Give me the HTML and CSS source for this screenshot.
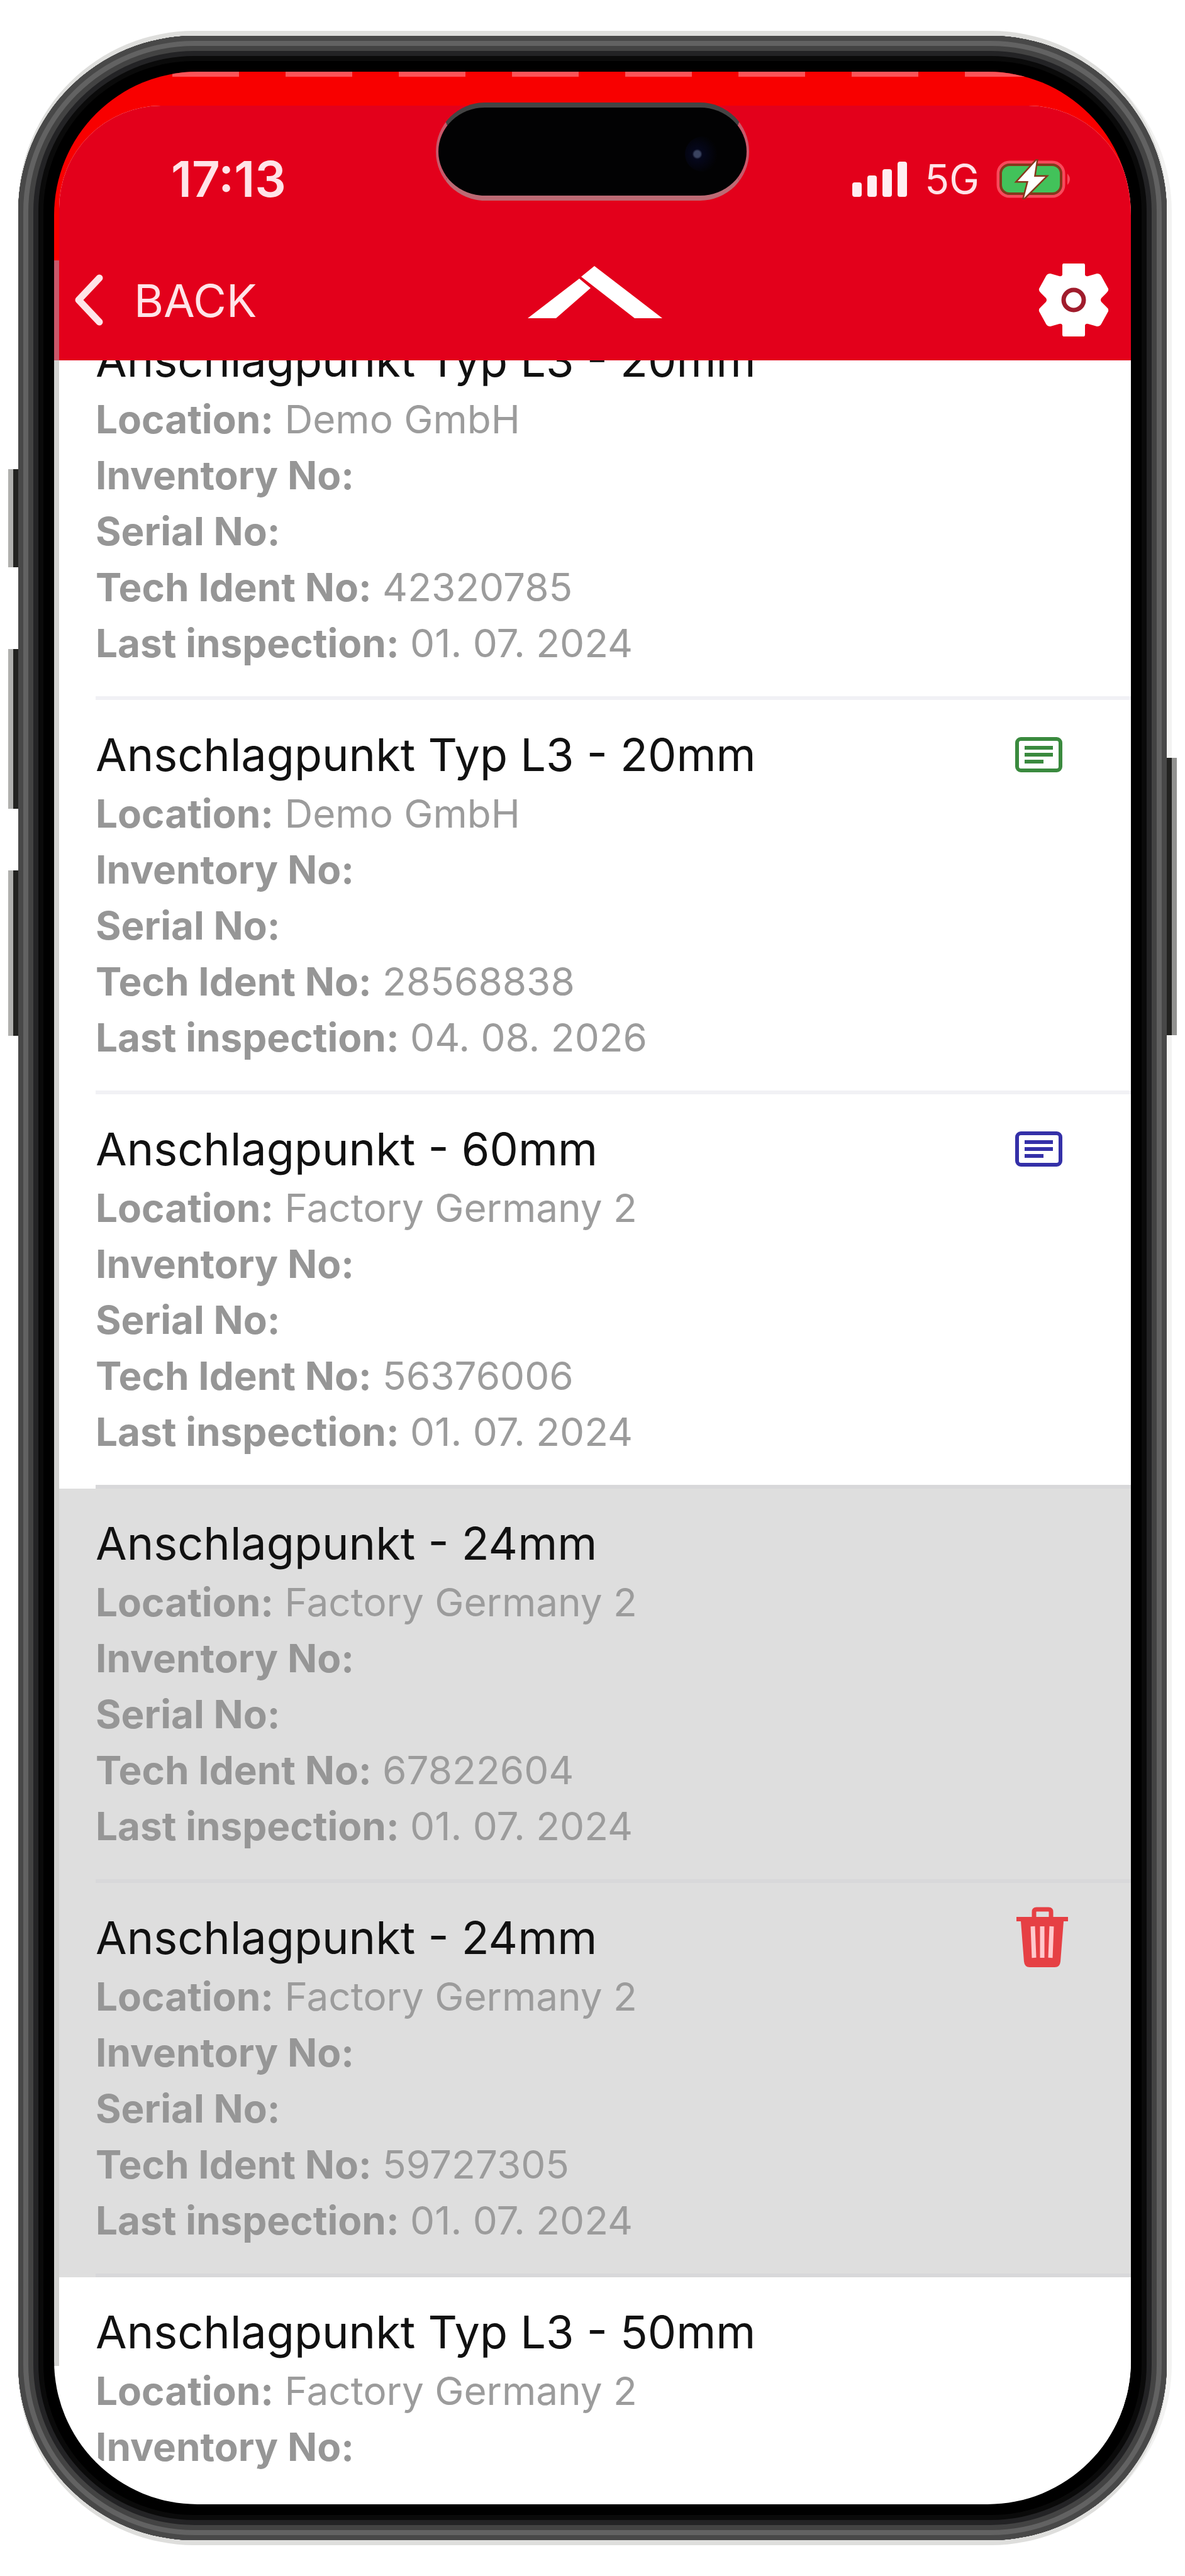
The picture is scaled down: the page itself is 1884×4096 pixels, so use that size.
FILE: index.html
```
<!DOCTYPE html>
<html lang="en">
<head>
    <meta charset="UTF-8">
    <meta name="viewport" content="width=device-width, initial-scale=1.0">
    <title>Inspections</title>
    <link rel="stylesheet" href="styles.css">
</head>
<body>
  <div class="phone">
    <span class="side-button action"></span>
    <span class="side-button volume-up"></span>
    <span class="side-button volume-down"></span>
    <span class="side-button power"></span>

    <div class="screen">
      <div class="dashes"></div>
      <div class="island"><span class="camera"></span></div>

      <div class="app">
        <header class="header">
          <div class="status-bar">
            <span class="time">17:13</span>
            <div class="status-icons">
              <svg class="signal" viewBox="0 0 88 56" width="88" height="56" fill="#ffeef2">
                <rect x="0" y="33" width="15" height="23" rx="4"/>
                <rect x="24" y="22" width="15" height="34" rx="4"/>
                <rect x="48" y="12" width="15" height="44" rx="4"/>
                <rect x="72" y="0" width="15" height="56" rx="4"/>
              </svg>
              <span class="network">5G</span>
              <svg class="battery" viewBox="0 0 122 64" width="122" height="64">
                <rect x="3" y="5" width="104" height="54" rx="18" fill="none" stroke="#f84a5c" stroke-width="5"/>
                <rect x="7" y="9" width="96" height="46" rx="14" fill="#42c25a" stroke="#86381c" stroke-width="4"/>
                <path d="M113 23q8 9 0 18z" fill="#f84a5c"/>
                <path d="M64 2L34 35H51L44 62L78 28H60L64 2Z" fill="#fff" stroke="#86381c" stroke-width="5" paint-order="stroke"/>
              </svg>
            </div>
          </div>
          <nav class="nav-bar">
            <button type="button" class="back-button">
              <svg viewBox="0 0 48 84" width="48" height="84" fill="none" stroke="#ffe3e8" stroke-width="11" stroke-linecap="round" stroke-linejoin="round">
                <path d="M41 7L8 42L41 77"/>
              </svg>
              BACK
            </button>
            <a href="#" class="logo" aria-label="Home">
              <svg viewBox="0 0 214 84" width="214" height="84" fill="#fff">
                <path d="M0 83L82 20L100 35L45 83Z"/>
                <path d="M85 17L106 0L214 83H170Z"/>
              </svg>
            </a>
            <button type="button" class="settings-button" aria-label="Settings">
              <svg viewBox="0 0 112 118" width="112" height="118">
                <path d="M40 1H72Q74 1 74 4V19Q75 22 79 21L93 17Q98 17 100 21L111 41Q112 45 108 48L100 56Q98 59 100 62L108 70Q112 73 111 77L100 97Q98 101 93 101L79 97Q75 96 74 99V114Q74 117 72 117H40Q38 117 38 114V99Q37 96 33 97L19 101Q14 101 12 97L1 77Q0 73 4 70L12 62Q14 59 12 56L4 48Q0 45 1 41L12 21Q14 17 19 17L33 21Q37 22 38 19V4Q38 1 40 1Z" fill="#fff"/>
                <circle cx="56" cy="59" r="16" fill="#fff" stroke="#a01c2c" stroke-width="7"/>
              </svg>
            </button>
          </nav>
        </header>

        <ul class="list">
          <li class="item">
            <div class="item-body">
              <div class="item-head"><h2>Anschlagpunkt Typ L3 - 20mm</h2></div>
              <p><b>Location:</b> Demo GmbH</p>
              <p><b>Inventory No:</b></p>
              <p><b>Serial No:</b></p>
              <p><b>Tech Ident No:</b> 42320785</p>
              <p><b>Last inspection:</b> 01. 07. 2024</p>
            </div>
          </li>
          <li class="item">
            <div class="item-body">
              <div class="item-head">
                <h2>Anschlagpunkt Typ L3 - 20mm</h2>
                <button type="button" class="icon-button note-green" aria-label="Note">
                  <svg viewBox="0 0 100 100" width="100" height="100" fill="none" stroke="currentColor" stroke-width="6">
                    <rect x="9" y="25" width="69" height="50" rx="6"/>
                    <path d="M21 39H66M21 50H66M21 61H51"/>
                  </svg>
                </button>
              </div>
              <p><b>Location:</b> Demo GmbH</p>
              <p><b>Inventory No:</b></p>
              <p><b>Serial No:</b></p>
              <p><b>Tech Ident No:</b> 28568838</p>
              <p><b>Last inspection:</b> 04. 08. 2026</p>
            </div>
          </li>
          <li class="item">
            <div class="item-body">
              <div class="item-head">
                <h2>Anschlagpunkt - 60mm</h2>
                <button type="button" class="icon-button note-blue" aria-label="Note">
                  <svg viewBox="0 0 100 100" width="100" height="100" fill="none" stroke="currentColor" stroke-width="6">
                    <rect x="9" y="25" width="69" height="50" rx="6"/>
                    <path d="M21 39H66M21 50H66M21 61H51"/>
                  </svg>
                </button>
              </div>
              <p><b>Location:</b> Factory Germany 2</p>
              <p><b>Inventory No:</b></p>
              <p><b>Serial No:</b></p>
              <p><b>Tech Ident No:</b> 56376006</p>
              <p><b>Last inspection:</b> 01. 07. 2024</p>
            </div>
          </li>
          <li class="item selected">
            <div class="item-body">
              <div class="item-head"><h2>Anschlagpunkt - 24mm</h2></div>
              <p><b>Location:</b> Factory Germany 2</p>
              <p><b>Inventory No:</b></p>
              <p><b>Serial No:</b></p>
              <p><b>Tech Ident No:</b> 67822604</p>
              <p><b>Last inspection:</b> 01. 07. 2024</p>
            </div>
          </li>
          <li class="item selected">
            <div class="item-body">
              <div class="item-head">
                <h2>Anschlagpunkt - 24mm</h2>
                <button type="button" class="icon-button delete" aria-label="Delete">
                  <svg viewBox="0 0 100 100" width="100" height="100">
                    <path d="M36 18V9Q36 5 40 5H59Q63 5 63 9V18" fill="none" stroke="currentColor" stroke-width="7"/>
                    <path d="M8 17H90V24H83L78 88Q77 97 69 97H29Q21 97 20 88L15 24H8Z" fill="currentColor"/>
                    <path d="M34 32L36 82M49 32V82M64 32L62 82" stroke="#ffc9cc" stroke-width="7"/>
                  </svg>
                </button>
              </div>
              <p><b>Location:</b> Factory Germany 2</p>
              <p><b>Inventory No:</b></p>
              <p><b>Serial No:</b></p>
              <p><b>Tech Ident No:</b> 59727305</p>
              <p><b>Last inspection:</b> 01. 07. 2024</p>
            </div>
          </li>
          <li class="item">
            <div class="item-body">
              <div class="item-head"><h2>Anschlagpunkt Typ L3 - 50mm</h2></div>
              <p><b>Location:</b> Factory Germany 2</p>
              <p><b>Inventory No:</b></p>
            </div>
          </li>
        </ul>
      </div>
    </div>
  </div>
</body>
</html>
```

FILE: styles.css
```
* {
  box-sizing: border-box;
}

body {
  margin: 0;
  padding: 57px 29px;
  background-color: #fff;
  font-family: Inter, "Liberation Sans", sans-serif;
}

button {
  padding: 0;
  border: none;
  background: none;
  font-family: inherit;
  cursor: pointer;
}

svg {
  display: block;
  flex: none;
}

/* phone frame */
.phone {
  position: relative;
  padding: 57px;
  border-radius: 280px;
  background-color: #000;
  box-shadow:
    inset 0 0 0 8px #484848,
    inset 0 0 0 16px #626262,
    inset 0 0 0 24px #434343,
    inset 0 0 0 32px #232325,
    inset 0 0 0 40px #0a0a0a,
    0 -8px 0 #dededc,
    0 8px 0 #dededc,
    8px 0 0 #f3f3f2;
}

.side-button {
  position: absolute;
  left: -16px;
  width: 16px;
  background-color: #222220;
  border-left: 8px solid #b0b0ae;
}

.action {
  top: 689px;
  height: 156px;
}

.volume-up {
  top: 975px;
  height: 254px;
}

.volume-down {
  top: 1327px;
  height: 263px;
}

.power {
  top: 1148px;
  left: auto;
  right: -16px;
  height: 441px;
  border-left: none;
  border-right: 8px solid #91918f;
}

.screen {
  position: relative;
  padding: 54px 0 45px 8px;
  border-radius: 228px;
  overflow: hidden;
  background: linear-gradient(#f80000 0 300px, #c8586a 300px 459px, #d2d2d0 459px calc(100% - 220px), #fff calc(100% - 220px));
}

.dashes {
  position: absolute;
  top: 0;
  left: 0;
  right: 0;
  height: 8px;
  background: repeating-linear-gradient(90deg, transparent 0 8px, #fb5458 8px 114px, transparent 114px 180px);
}

.island {
  position: absolute;
  top: 49px;
  left: 50%;
  z-index: 1;
  width: 498px;
  height: 156px;
  margin-left: -249px;
  border: 4px solid #c8586a;
  border-top: 8px solid #444;
  border-bottom: 8px solid #bc6a74;
  border-radius: 84px;
  background-color: #020203;
}

.camera {
  position: absolute;
  top: 46px;
  right: 42px;
  width: 56px;
  height: 56px;
  border-radius: 50%;
  background: radial-gradient(circle at 35% 50%, #3a4360 0 5px, #05071c 8px, #020203 70%);
}

.app {
  border-radius: 163px 163px 150px 150px;
  overflow: hidden;
  background-color: #fff;
}

/* header */
.header {
  position: relative;
  background-color: #e3001b;
  color: #fff;
}

.status-bar {
  display: flex;
  justify-content: space-between;
  align-items: center;
  height: 233px;
  padding: 0 92px 0 178px;
}

.time {
  color: #ffe3e8;
  font-size: 78px;
  font-weight: 600;
}

.status-icons {
  display: flex;
  align-items: center;
  gap: 27px;
}

.network {
  color: #ffe3e8;
  font-size: 64px;
}

.nav-bar {
  display: grid;
  grid-template-columns: 1fr auto 1fr;
  align-items: center;
  height: 172px;
  padding: 0 23px 20px;
}

.back-button {
  display: flex;
  align-items: center;
  gap: 48px;
  color: #ffe3e8;
  font-size: 72px;
}

.logo {
  padding-bottom: 24px;
}

.settings-button {
  justify-self: end;
  margin-right: 12px;
}

/* list */
.list {
  margin: 0;
  padding: 0;
  list-style: none;
}

.item {
  padding-left: 58px;
}

.item:first-child {
  margin-top: -87px;
}

.item-body {
  padding: 42px 0 40px;
  border-bottom: 6px solid #f1f1f5;
}

.item:last-child .item-body {
  padding-bottom: 2px;
  border-bottom: none;
}

.selected {
  background-color: #dedede;
}

.selected .item-body,
.item:has(+ .selected) .item-body {
  border-bottom-color: #d8d8da;
}

.item-head {
  display: flex;
  justify-content: space-between;
  align-items: center;
  height: 89px;
  margin-bottom: 5px;
  padding-right: 90px;
}

.item h2 {
  margin: 0;
  color: #111;
  font-size: 72px;
  font-weight: 400;
  line-height: 89px;
}

.item p {
  margin: 0;
  color: #9c9c9c;
  font-size: 62px;
  line-height: 89px;
}

.item b {
  color: #969696;
  font-weight: 700;
}

.note-green {
  color: #3a8a3e;
}

.note-blue {
  color: #3430a8;
}

.delete {
  color: #e64044;
}
```
